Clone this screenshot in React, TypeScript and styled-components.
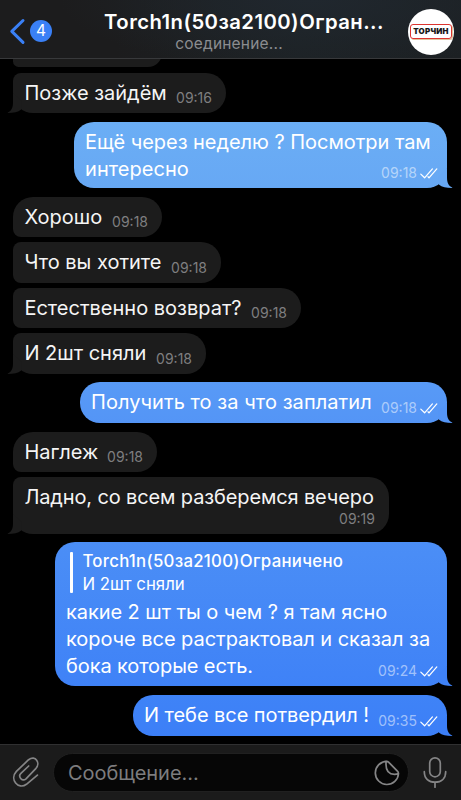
import React from 'react';
import styled, { createGlobalStyle, css } from 'styled-components';

const GlobalStyle = createGlobalStyle`
  * { box-sizing: border-box; }
  html, body { margin: 0; background: #000; }
  body { font-family: Inter, "Noto Sans", sans-serif; }
`;

const Screen = styled.main`
  width: 461px;
  height: 800px;
  display: flex;
  flex-direction: column;
  overflow: hidden;
  background: #000;
  color: #fff;
`;

const Header = styled.header`
  flex: none;
  height: 59px;
  display: grid;
  grid-template-columns: 74px minmax(0, 1fr) 80px;
  border-bottom: 1px solid #38393b;
  background: radial-gradient(ellipse 250px 70px at 310px 0, #20272e, rgba(32, 39, 46, 0) 100%),
    linear-gradient(90deg, #1c1c1d 25%, #1d2225 65%, #1c2023);
`;

const BackButton = styled.div`
  display: flex;
  align-items: flex-start;
  padding: 18px 0 0 9px;
  gap: 4px;
`;

const UnreadBadge = styled.span`
  width: 22px;
  height: 22px;
  margin-top: 2px;
  border-radius: 50%;
  background: #3a80f6;
  font-size: 15.5px;
  line-height: 22px;
  text-align: center;
`;

const Heading = styled.div`
  display: flex;
  flex-direction: column;
  align-items: center;
  padding-top: 9px;
  white-space: nowrap;
`;

const Title = styled.h1`
  margin: 0 0 0 33px;
  font-size: 20.3px;
  line-height: 26px;
  font-weight: 600;
  letter-spacing: 0.45px;
`;

const Status = styled.span`
  font-size: 15.5px;
  line-height: 18px;
  letter-spacing: 0.2px;
  padding-left: 3px;
  color: #8b8d90;
`;

const Avatar = styled.div`
  width: 46px;
  height: 46px;
  margin: 9px 0 0 27px;
  border-radius: 50%;
  background: #fff;
  display: flex;
  align-items: center;
  justify-content: center;
  overflow: hidden;
`;

const BrandPlate = styled.span`
  width: 42px;
  height: 15px;
  margin-top: -1px;
  border: 1.5px solid #dc342f;
  border-radius: 3px;
  box-shadow: 1px 1px 0 #dec49c;
  color: #171717;
  font-size: 7.9px;
  font-weight: 900;
  line-height: 13px;
  text-align: center;
  letter-spacing: 0.25px;
  white-space: nowrap;
`;

const Feed = styled.section`
  flex: 1;
  min-height: 0;
  display: flex;
  flex-direction: column;
  padding: 0 13px;
  overflow: hidden;
`;

const Bubble = styled.article<{
  $out?: boolean;
  $w: number;
  $h: number;
  $gap: number;
  $bg?: string;
  $pos?: 'first' | 'middle' | 'last';
}>`
  position: relative;
  flex: none;
  width: ${p => p.$w}px;
  height: ${p => p.$h}px;
  margin-top: ${p => p.$gap}px;
  padding: 7px 11px 0;
  white-space: nowrap;
  ${p => p.$out ? css`
    align-self: flex-end;
    margin-right: 1px;
    border-radius: 20px;
    background: ${p.$bg};
    color: #fff;
  ` : css`
    align-self: flex-start;
    padding-left: 11.4px;
    border-radius: ${p.$pos === 'first' ? 20 : 8}px 20px 20px ${p.$pos === 'last' ? 20 : 8}px;
    background: #1c1c1c;
    color: #f5f5f5;
  `}
`;

const TailShape = styled.svg<{ $out?: boolean; $color: string }>`
  position: absolute;
  bottom: 0;
  width: 24px;
  height: 20px;
  fill: ${p => p.$color};
  ${p => p.$out ? css`right: -6px;` : css`left: -6px; transform: scaleX(-1);`}
`;

const Line = styled.span<{ $track?: number }>`
  display: block;
  font-size: 20px;
  line-height: 27px;
  letter-spacing: ${p => p.$track ?? 0}px;
`;

const Meta = styled.span<{ $out?: boolean }>`
  position: absolute;
  right: ${p => (p.$out ? 9.5 : 14)}px;
  bottom: 6px;
  display: flex;
  align-items: center;
  gap: 2.5px;
  font-size: 14px;
  line-height: 18px;
  letter-spacing: 0;
  color: ${p => (p.$out ? 'rgba(255,255,255,.52)' : '#7f7f80')};
`;

const Quote = styled.blockquote`
  position: relative;
  margin: 3px 0 6px 4.4px;
  padding: 0 0 0 12px;
  height: 41px;

  &::before {
    content: '';
    position: absolute;
    left: 0;
    top: 0;
    width: 2.4px;
    height: 41px;
    border-radius: 1px;
    background: #fff;
  }
`;

const QuoteLine = styled.span<{ $bold?: boolean; $track?: number }>`
  display: block;
  position: relative;
  top: -2px;
  font-size: 16.8px;
  line-height: 23px;
  font-weight: ${p => (p.$bold ? 500 : 400)};
  letter-spacing: ${p => p.$track ?? 0}px;
`;

const Composer = styled.footer`
  flex: none;
  height: 56px;
  display: flex;
  align-items: flex-start;
  border-top: 1px solid #303031;
  background: #1b1b1b;
  padding: 8px 12px 0;
`;

const Field = styled.div`
  flex: none;
  width: 356px;
  height: 39px;
  margin: 0 14px 0 13px;
  padding: 0 8px 0 14px;
  display: flex;
  align-items: center;
  justify-content: space-between;
  border: 1px solid #202020;
  border-radius: 20px;
  background: #060606;
`;

const Placeholder = styled.span`
  color: #7d7d7e;
  font-size: 20px;
  line-height: 26px;
  letter-spacing: -0.05px;
`;

const Glyph = styled.svg<{ $drop?: number }>`
  flex: none;
  margin-top: ${p => p.$drop ?? 0}px;
  fill: none;
  stroke: #858586;
  stroke-width: 1.7;
  stroke-linecap: round;
  stroke-linejoin: round;
`;

const Ticks = () => (
  <svg width="18" height="11" viewBox="0 0 18 11" fill="none" stroke="#fff" strokeWidth="1.25" strokeLinecap="round" strokeLinejoin="round">
    <path d="M.8 6.1 4.6 9.8 12.4.9M8 8.8 9 9.8 16.8.9" />
  </svg>
);

const Tail = ({ out, color }: { out?: boolean; color: string }) => (
  <TailShape $out={out} $color={color} viewBox="0 0 24 20">
    <path d="M18 0V9.5C18 14.5 19.6 18 23.1 19.5Q23.7 20 22.9 20C17.5 20 13 19.2 9.8 16.6L9.8 8Z" />
  </TailShape>
);

type Message = {
  lines: [string, number][];
  time: string;
  w: number;
  h: number;
  gap: number;
  out?: boolean;
  bg?: string;
  tail?: string;
  pos?: 'first' | 'middle' | 'last';
  quote?: boolean;
};

const messages: Message[] = [
  { lines: [['Позже зайдём', 0]], time: '09:16', w: 213, h: 40, gap: 6, pos: 'last', tail: '#1c1c1c' },
  { lines: [['Ещё через неделю ? Посмотри там', -0.04], ['интересно', 0.05]], time: '09:18', w: 373, h: 66, gap: 9, out: true, bg: 'linear-gradient(#6baef5,#67a8f4)', tail: '#67a8f4' },
  { lines: [['Хорошо', 0]], time: '09:18', w: 149, h: 40, gap: 9, pos: 'first' },
  { lines: [['Что вы хотите', 0]], time: '09:18', w: 208, h: 41, gap: 5, pos: 'middle' },
  { lines: [['Естественно возврат?', 0]], time: '09:18', w: 288, h: 40, gap: 5, pos: 'middle' },
  { lines: [['И 2шт сняли', 0]], time: '09:18', w: 193, h: 41, gap: 5, pos: 'last', tail: '#1c1c1c' },
  { lines: [['Получить то за что заплатил', 0.06]], time: '09:18', w: 367, h: 41, gap: 8, out: true, bg: 'linear-gradient(#589af6,#5495f6)', tail: '#5495f6' },
  { lines: [['Наглеж', 0]], time: '09:18', w: 144, h: 40, gap: 9, pos: 'first' },
  { lines: [['Ладно, со всем разберемся вечеро', -0.13]], time: '09:19', w: 376, h: 57, gap: 5, pos: 'last', tail: '#1c1c1c' },
  { lines: [['какие 2 шт ты о чем ? я там ясно', -0.07], ['короче все растрактовал и сказал за', -0.05], ['бока которые есть.', -0.1]], time: '09:24', w: 392, h: 144, gap: 8, out: true, bg: 'linear-gradient(#4b8ef6,#3f82f7)', tail: '#3f82f7', quote: true },
  { lines: [['И тебе все потвердил !', -0.06]], time: '09:35', w: 314, h: 41, gap: 9, out: true, bg: 'linear-gradient(#3f83f7,#3c7ff7)', tail: '#3c7ff7' },
];

export default function App() {
  return (
    <>
      <GlobalStyle />
      <Screen>
        <Header>
          <BackButton>
            <svg width="17" height="27" viewBox="0 0 17 27" fill="none" stroke="#3a80f6" strokeWidth="3" strokeLinecap="round" strokeLinejoin="round">
              <path d="M14 2.5 2.8 13.4 14 24.4" />
            </svg>
            <UnreadBadge>4</UnreadBadge>
          </BackButton>
          <Heading>
            <Title>Torch1n(50за2100)Огран...</Title>
            <Status>соединение...</Status>
          </Heading>
          <Avatar><BrandPlate>ТОРЧИН</BrandPlate></Avatar>
        </Header>
        <Feed>
          <Bubble $w={149} $h={28} $gap={-20} $pos="middle" />
          {messages.map((m, i) => (
            <Bubble key={i} $out={m.out} $w={m.w} $h={m.h} $gap={m.gap} $bg={m.bg} $pos={m.pos}>
              {m.tail && <Tail out={m.out} color={m.tail} />}
              {m.quote && (
                <Quote>
                  <QuoteLine $bold $track={0.28}>Torch1n(50за2100)Ограничено</QuoteLine>
                  <QuoteLine>И 2шт сняли</QuoteLine>
                </Quote>
              )}
              {m.lines.map(([text, track]) => <Line key={text} $track={track}>{text}</Line>)}
              <Meta $out={m.out}>{m.time}{m.out && <Ticks />}</Meta>
            </Bubble>
          ))}
        </Feed>
        <Composer>
          <Glyph $drop={3} width="28" height="31" viewBox="0 0 28 31">
            <path d="M16.7 10 8.9 17.3C5.8 20.3 9.8 26.3 14 22.8L24 12.3C28.6 7.2 23.6-1.5 16.6 3.7L4.4 15.4C-2.8 23.3 6.2 34.2 14.4 28.3L25.4 19.1" />
          </Glyph>
          <Field>
            <Placeholder>Сообщение...</Placeholder>
            <Glyph width="26" height="26" viewBox="0 0 26 26">
              <path d="M12.5 1.3A11.6 11.6 0 1 0 24.5 13.5Q24.4 12.2 23.4 11.2L14.8 2.3Q13.8 1.3 12.5 1.3ZM12 1.4V4.5C12 10.5 15 14.3 20.5 14.3Q22.7 14.3 24.4 13.5" />
            </Glyph>
          </Field>
          <Glyph width="24" height="36" viewBox="0 0 24 36">
            <rect x="6.7" y="4.8" width="10.6" height="19" rx="5.3" />
            <path d="M1.3 18.7C1.3 25.7 5.8 29.2 12 29.2S22.7 25.7 22.7 18.7M12 29.2V34.2" />
          </Glyph>
        </Composer>
      </Screen>
    </>
  );
}
